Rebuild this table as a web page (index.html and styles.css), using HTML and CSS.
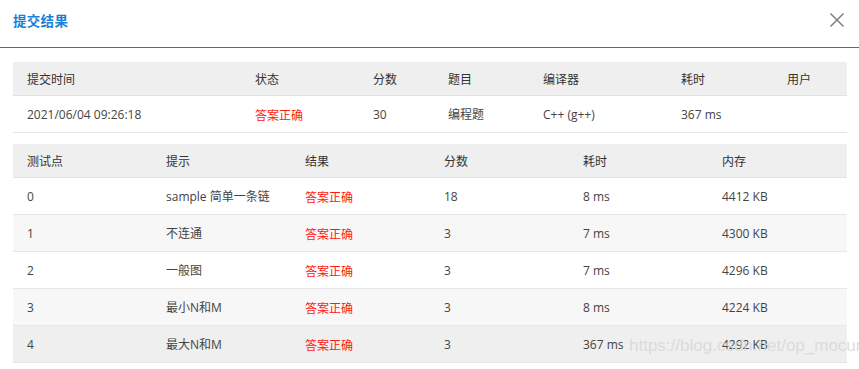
FILE: index.html
```html
<!DOCTYPE html>
<html lang="zh-CN">
<head>
<meta charset="utf-8">
<title>提交结果</title>
<link rel="stylesheet" href="styles.css">
</head>
<body>
<div class="dialog">
  <div class="dialog-header">
    <h2 class="dialog-title">提交结果</h2>
    <button class="close-btn" aria-label="关闭">
      <svg width="16" height="16" viewBox="0 0 16 16"><path d="M1.5 1.5 L14.5 14.5 M14.5 1.5 L1.5 14.5" stroke="#808080" stroke-width="1.5" fill="none"/></svg>
    </button>
  </div>
  <div class="dialog-body">
    <table class="grid summary">
      <colgroup>
        <col class="c1"><col class="c2"><col class="c3"><col class="c4"><col class="c5"><col class="c6"><col class="c7">
      </colgroup>
      <thead>
        <tr><th>提交时间</th><th>状态</th><th>分数</th><th>题目</th><th>编译器</th><th>耗时</th><th>用户</th></tr>
      </thead>
      <tbody>
        <tr><td>2021/06/04 09:26:18</td><td class="ok">答案正确</td><td>30</td><td>编程题</td><td>C++ (g++)</td><td>367 ms</td><td></td></tr>
      </tbody>
    </table>
    <table class="grid cases">
      <thead>
        <tr><th>测试点</th><th>提示</th><th>结果</th><th>分数</th><th>耗时</th><th>内存</th></tr>
      </thead>
      <tbody>
        <tr><td>0</td><td>sample 简单一条链</td><td class="ok">答案正确</td><td>18</td><td>8 ms</td><td>4412 KB</td></tr>
        <tr class="alt"><td>1</td><td>不连通</td><td class="ok">答案正确</td><td>3</td><td>7 ms</td><td>4300 KB</td></tr>
        <tr><td>2</td><td>一般图</td><td class="ok">答案正确</td><td>3</td><td>7 ms</td><td>4296 KB</td></tr>
        <tr class="alt"><td>3</td><td>最小N和M</td><td class="ok">答案正确</td><td>3</td><td>8 ms</td><td>4224 KB</td></tr>
        <tr class="hover"><td>4</td><td>最大N和M</td><td class="ok">答案正确</td><td>3</td><td>367 ms</td><td>4292 KB</td></tr>
      </tbody>
    </table>
  </div>
  <div class="watermark">https://blog.csdn.net/op_mocun</div>
</div>
</body>
</html>
```

FILE: styles.css
```css
html, body {
  margin: 0;
  padding: 0;
  background: #ffffff;
}
body {
  font-family: "Open Sans", "Noto Sans CJK SC", sans-serif;
  color: #333333;
  width: 859px;
  height: 369px;
  overflow: hidden;
}
.dialog {
  position: relative;
  width: 859px;
  height: 369px;
}
.dialog-header {
  height: 47px;
  border-bottom: 1px solid #1a7ad6;
  display: flex;
  align-items: center;
  justify-content: space-between;
  padding: 0 14px 0 13px;
  box-sizing: content-box;
}
.dialog-title {
  margin: 0 0 7px 0;
  font-family: "Noto Sans CJK SC", sans-serif;
  font-size: 13.5px;
  font-weight: 700;
  color: #1a7fd9;
  letter-spacing: 0.3px;
}
.close-btn {
  border: 0;
  background: none;
  padding: 0;
  margin: 0 0 7px 0;
  width: 16px;
  height: 16px;
  display: flex;
}
.dialog-body {
  padding: 14px 12px 0 13px;
  display: flex;
  flex-direction: column;
  gap: 11px;
}
.grid {
  width: 834px;
  border-collapse: collapse;
  table-layout: fixed;
  font-size: 12px;
}
.grid th,
.grid td {
  text-align: left;
  padding: 0 0 0 14px;
  white-space: nowrap;
  overflow: hidden;
}
.grid th {
  height: 33px;
  font-weight: 400;
  font-family: "Noto Sans CJK SC", sans-serif;
  color: #333333;
  background: #efefef;
  border-bottom: 1px solid #e2e2e2;
}
.grid td {
  height: 36px;
  border-bottom: 1px solid #e6e6e6;
  color: #444444;
}
.grid .ok {
  color: #ff1a0f;
  font-family: "Noto Sans CJK SC", sans-serif;
}
.summary .c1 { width: 228px; }
.summary .c2 { width: 118px; }
.summary .c3 { width: 75px; }
.summary .c4 { width: 95px; }
.summary .c5 { width: 138px; }
.summary .c6 { width: 106px; }
.summary .c7 { width: 74px; }
.cases tr.alt td { background: #f7f7f7; }
.cases tr.hover td { background: #efefef; }
.watermark {
  position: absolute;
  left: 629px;
  top: 336px;
  font-family: "Liberation Sans", sans-serif;
  font-size: 17px;
  color: rgba(215, 215, 215, 0.85);
  white-space: nowrap;
}
```
